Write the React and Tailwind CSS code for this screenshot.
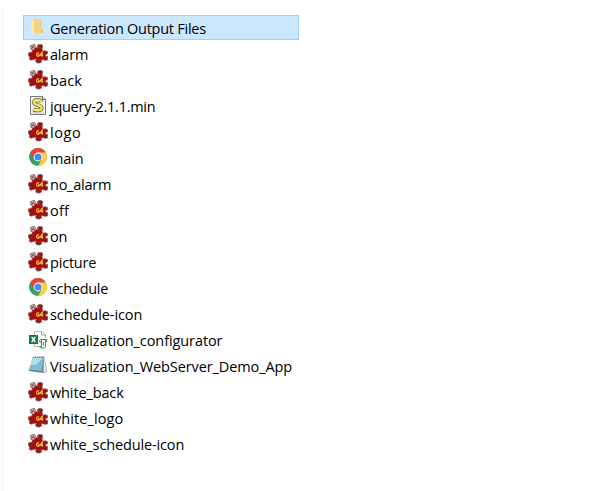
import React from "react";

function FolderIcon() {
  return (
    <svg width="20" height="20" viewBox="0 0 20 20">
      <path d="M3 1h10.5v11H3z" fill="#f8dc8c" />
      <path d="M12 11.5h3V15H7z" fill="#e9c56d" />
      <path d="M6.5 1H13.5v12l-1 2h-6z" fill="#f6d47d" />
      <path d="M3 1l3.5 1.5V16L3 14.5z" fill="#ffe9a8" />
      <path d="M6.7 3v13" stroke="#efcc78" strokeWidth=".7" />
    </svg>
  );
}

function PuzzleIcon() {
  return (
    <svg width="20" height="20" viewBox="0 0 20 20">
      <path
        d="M2.5 1.5l4-1.2L8 3.5l1.8.8L9.4 1.7 11 .4h2.5l1.3 1.4L14 5l1 2.2 2.2-.5 2.3.8v2.3l-1.9.8v1.7l2.1.2v3.2l-2 .8-2.5-.8h-2l.4 2.2-2 1.2-3-.3-1-1.7.8-2-3.2.4-2 .8-1.8-1 .3-2.8L.5 12V9l2-.8H4L4.3 6 2.4 4.7z"
        fill="#a30f0f" stroke="#725c59" strokeWidth=".7" strokeLinejoin="round"
      />
      <path d="M1.8 1.8L6.3.3 7.8 3.5 5.8 6 2.8 5z" fill="#c9aba8" />
      <path d="M2.5 2l4.2 2.3M3.5 4.8l2.6-3.6" stroke="#9b4543" strokeWidth=".9" />
      <path d="M11.4 2.5l.4 2.5M11 15.3v2" stroke="#bf2822" strokeWidth=".9" fill="none" />
      <path d="M11.1 8.9C8 7.8 7.8 12.9 10.4 12.2c1-.2 1-1.7-.4-1.5M14.2 12.7V8.4l-2.3 2.8h3.2" stroke="#ffca46" strokeWidth="1.1" fill="none" />
    </svg>
  );
}

function ScriptIcon() {
  return (
    <svg width="20" height="20" viewBox="0 0 20 20">
      <path d="M2.5.5h12l3 3v15h-15z" fill="#f4f4f2" stroke="#777" />
      <path d="M14.5.5v3h3" fill="#ddd" stroke="#777" />
      <path d="M13.5 6C12.5 3.4 6.2 3.4 6.2 6.4c0 3 7.5 2.3 7.5 5.6 0 2.8-5 3-8.4 1.4" fill="none" stroke="#68653c" strokeWidth="4" />
      <path d="M13.5 6C12.5 3.4 6.2 3.4 6.2 6.4c0 3 7.5 2.3 7.5 5.6 0 2.8-5 3-8.4 1.4" fill="none" stroke="#eee05c" strokeWidth="2.5" />
      <path d="M7.5 4.9h3.5M7 13.6h4" stroke="#fff9ae" strokeWidth="1" />
      <path d="M4.5 17h11" stroke="#c6c6c6" />
    </svg>
  );
}

function ChromeIcon() {
  return (
    <svg width="20" height="20" viewBox="0 0 20 20">
      <circle cx="10" cy="9" r="9" fill="#36a35d" />
      <path d="M10 9L2.2 4.5A9 9 0 0 1 17.8 4.5z" fill="#df4938" />
      <path d="M2.2 4.5L6.1 11.2 10 9V4.5z" fill="#df4938" />
      <path d="M10 4.5h7.8A9 9 0 0 1 10 18l3.9-6.7z" fill="#ffd044" />
      <circle cx="10" cy="9" r="4.4" fill="#fff" />
      <circle cx="10" cy="9" r="3.5" fill="#4a8af4" />
    </svg>
  );
}

function SheetIcon() {
  return (
    <svg width="20" height="20" viewBox="0 -1 20 20">
      <path d="M6.5 4V.5H14L17.5 4v3M6.5 13v2.5H11" fill="none" stroke="#b8b8b8" />
      <path d="M13.5.5V4h4" fill="none" stroke="#a3a3a3" />
      <path d="M1 4h9v9H1z" fill="#127c45" />
      <path d="M3.7 6l3.6 5M7.3 6l-3.6 5" stroke="#fff" strokeWidth="1.3" />
      <path d="M12.5 8.5h6.2v2h-1.7M13.5 8.5v7h-1.8l.8 1.5h4l.9-1.2V8.8M15.4 11v3.5M12.5 8.5l-.8 1V11h1.8" fill="none" stroke="#27925b" strokeWidth="1" />
    </svg>
  );
}

function NotebookIcon() {
  return (
    <svg width="20" height="20" viewBox="0 0 20 20">
      <path d="M5 1l11-.5L19.2 15l-3 2.3L1 15z" fill="#788f99" />
      <path d="M16 1.5l2.6 13.2-3 2z" fill="#e4edf0" />
      <path d="M5 1.8h10.5L13.5 15.5.8 14z" fill="#80bcd2" />
      <path d="M5 1.8h10L8 9l-5.5-.5z" fill="#b3dde9" />
      <path d="M1 13.7l12.5 1.3v1L1 14.8z" fill="#4c8498" />
      <path d="M5 1.2h11" stroke="#627e88" strokeDasharray="1 1" />
    </svg>
  );
}

const icons = {
  folder: FolderIcon,
  puzzle: PuzzleIcon,
  script: ScriptIcon,
  chrome: ChromeIcon,
  sheet: SheetIcon,
  notebook: NotebookIcon,
};

const files = [
  ["Generation Output Files", "folder", "tracking-[-0.26px]"],
  ["alarm", "puzzle", "tracking-[-0.2px]"],
  ["back", "puzzle", "tracking-[0.1px]"],
  ["jquery-2.1.1.min", "script", "tracking-[-0.27px]"],
  ["logo", "puzzle", "tracking-[0.6px]"],
  ["main", "chrome", "tracking-[-0.1px]"],
  ["no_alarm", "puzzle", "tracking-[-0.25px]"],
  ["off", "puzzle", "tracking-[0.2px]"],
  ["on", "puzzle", "tracking-[-0.2px]"],
  ["picture", "puzzle", "tracking-[-0.2px]"],
  ["schedule", "chrome", "tracking-[-0.3px]"],
  ["schedule-icon", "puzzle", "tracking-[-0.08px]"],
  ["Visualization_configurator", "sheet", "tracking-[-0.09px]"],
  ["Visualization_WebServer_Demo_App", "notebook", "tracking-[-0.1px]"],
  ["white_back", "puzzle", "tracking-[-0.13px]"],
  ["white_logo", "puzzle", "tracking-[0.08px]"],
  ["white_schedule-icon", "puzzle", "tracking-[-0.14px]"],
];

export default function App() {
  return (
    <main className="h-[491px] w-[593px] overflow-hidden bg-white pl-[2px] pt-[7px] font-['Open_Sans','Noto_Sans',sans-serif] text-[14.5px] text-black">
      <ul className="h-full border-l border-[#f3f3f3] pl-5 pt-2">
        {files.map(([name, icon, tracking], i) => {
          const Icon = icons[icon];
          return (
            <li
              key={name}
              className={`flex w-[276px] items-start gap-[2px] border pl-1 pt-[2px] ${i === 0 ? "mb-px h-[25px] border-[#99d1ff] bg-[#cce8ff]" : "h-[26px] border-transparent"}`}
            >
              <Icon />
              <span className={`whitespace-nowrap pt-px leading-5 ${tracking}`}>{name}</span>
            </li>
          );
        })}
      </ul>
    </main>
  );
}
